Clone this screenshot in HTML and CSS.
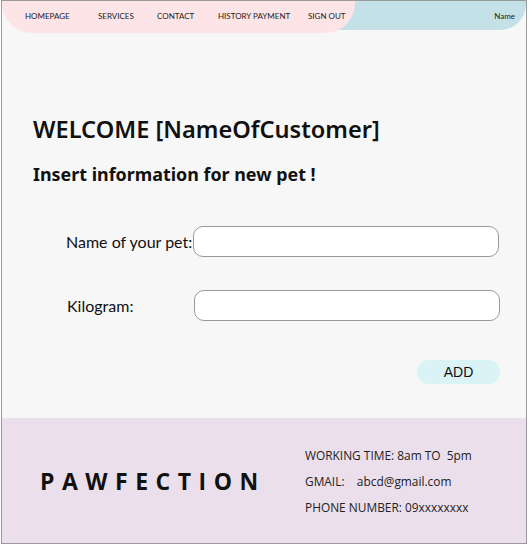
FILE: index.html
```html
<!DOCTYPE html>
<html>
<head>
<meta charset="utf-8">
<link rel="stylesheet" href="styles.css">
</head>
<body>
<div class="page">
  <header class="topbar">
    <nav class="nav">
      <a class="link l1">HOMEPAGE</a>
      <a class="link l2">SERVICES</a>
      <a class="link l3">CONTACT</a>
      <a class="link l4">HISTORY PAYMENT</a>
      <a class="link">SIGN OUT</a>
    </nav>
    <div class="user">Name</div>
  </header>
  <main class="main">
    <h1 class="title">WELCOME [NameOfCustomer]</h1>
    <h2 class="subtitle">Insert information for new pet !</h2>
    <form class="form">
      <div class="row">
        <label class="label">Name of your pet:</label>
        <input class="field" type="text">
      </div>
      <div class="row row2">
        <label class="label k">Kilogram:</label>
        <input class="field" type="text">
      </div>
      <div class="actions">
        <button class="add" type="button">ADD</button>
      </div>
    </form>
  </main>
  <footer class="footer">
    <div class="brand">PAWFECTION</div>
    <div class="info">
      <div>WORKING TIME: 8am TO&nbsp; 5pm</div>
      <div>GMAIL:&nbsp;&nbsp;&nbsp; abcd@gmail.com</div>
      <div>PHONE NUMBER: 09xxxxxxxx</div>
    </div>
  </footer>
</div>
</body>
</html>
```
FILE: styles.css
```css
* { box-sizing: border-box; }
html, body { margin: 0; padding: 0; background: #ffffff; }
body { padding-left: 1px; font-family: "Lato", "Open Sans", sans-serif; color: #111; }

.page {
  width: 526px;
  height: 544px;
  border: 1px solid #9a9a9a;
  background: #f7f7f7;
  display: flex;
  flex-direction: column;
}

.topbar {
  display: flex;
  height: 32px;
  flex-shrink: 0;
}
.nav {
  width: 353px;
  height: 32px;
  background: #fde4e7;
  border-radius: 0 0 30px 30px;
  display: flex;
  align-items: center;
  padding: 0 0 3px 23px;
  position: relative;
  z-index: 1;
  flex-shrink: 0;
}
.link {
  font-family: "Lato", sans-serif;
  font-size: 8px;
  color: #222;
  white-space: nowrap;
}
.l1 { width: 73px; }
.l2 { width: 59px; }
.l3 { width: 61px; }
.l4 { width: 90px; }

.user {
  flex: 1;
  height: 29px;
  margin-left: -60px;
  background: #c3e1e6;
  border-bottom-right-radius: 26px;
  display: flex;
  align-items: center;
  justify-content: flex-end;
  padding: 0 11px 0 0;
  font-size: 8px;
  color: #222;
}

.main {
  flex: 1;
  padding: 81px 0 0 31px;
}
.title {
  margin: 0;
  font-family: "Noto Sans", sans-serif;
  font-weight: 600;
  font-size: 23.6px;
  line-height: 30px;
  color: #111;
}
.subtitle {
  margin: 19px 0 0;
  font-family: "Noto Sans", sans-serif;
  font-weight: 700;
  font-size: 17.9px;
  line-height: 22px;
  color: #111;
}
.form {
  margin: 41px 0 0 33px;
  width: 434px;
}
.row {
  display: grid;
  grid-template-columns: 127px 306px;
  align-items: center;
}
.row2 { margin-top: 33px; }
.label {
  font-family: "Lato", sans-serif;
  font-size: 16px;
  color: #111;
  white-space: nowrap;
}
.k { padding-left: 1px; }
.row2 .field { margin-left: 1px; }
.field {
  height: 31px;
  width: 306px;
  border: 1px solid #999;
  border-radius: 10px;
  background: #fff;
  outline: none;
}
.actions {
  display: flex;
  justify-content: flex-end;
  margin-top: 39px;
}
.add {
  width: 83px;
  height: 24px;
  border: none;
  border-radius: 12px;
  background: #d9f3f7;
  font-family: "Liberation Sans", sans-serif;
  font-size: 14px;
  color: #111;
  padding: 0;
}

.footer {
  height: 125px;
  flex-shrink: 0;
  background: #ebdfeb;
  display: flex;
  align-items: center;
}
.brand {
  margin-left: 38px;
  width: 265px;
  font-family: "Open Sans", sans-serif;
  font-weight: 700;
  font-size: 23px;
  letter-spacing: 7.5px;
  color: #111;
}
.info {
  font-family: "Open Sans", sans-serif;
  font-size: 11.9px;
  line-height: 26px;
  color: #222;
  margin-top: 0;
}
```
